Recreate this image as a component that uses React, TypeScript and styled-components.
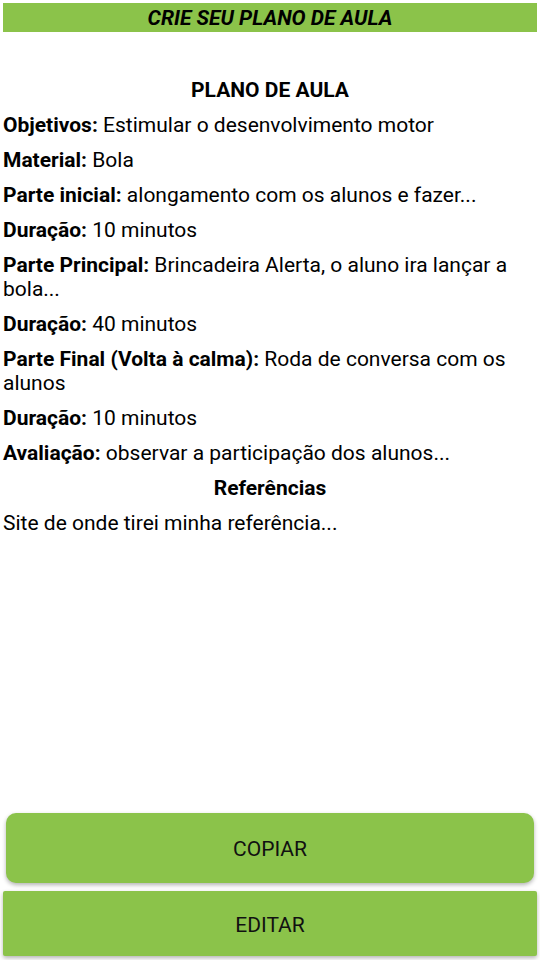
import React from 'react';
import styled, { createGlobalStyle } from 'styled-components';

const GlobalStyle = createGlobalStyle`
  html, body {
    margin: 0;
    padding: 0;
    background: #fff;
  }
  body {
    font-family: Roboto, "Liberation Sans", sans-serif;
    color: #000;
  }
`;

const Screen = styled.div`
  width: 540px;
  height: 960px;
  box-sizing: border-box;
  padding: 3px 3px 4px;
  display: flex;
  flex-direction: column;
`;

const TitleBar = styled.div`
  height: 29px;
  background: #8bc34a;
  display: flex;
  align-items: center;
  justify-content: center;
  font-size: 21px;
  font-weight: bold;
  font-style: italic;
`;

const Content = styled.div`
  flex: 1;
  padding-top: 46px;
`;

const Heading = styled.div`
  text-align: center;
  font-weight: bold;
  font-size: 21px;
  line-height: 24px;
  margin-bottom: 11px;
`;

const Line = styled.p`
  margin: 0 0 11px;
  font-size: 21px;
  line-height: 24px;
`;

const Footer = styled.div`
  display: flex;
  flex-direction: column;
  gap: 8px;
`;

const Button = styled.button<{ $rounded?: boolean }>`
  border: none;
  background: #8bc34a;
  font-family: Roboto, "Liberation Sans", sans-serif;
  font-size: 21px;
  color: #111;
  cursor: pointer;
  padding-top: 3px;
  height: ${p => (p.$rounded ? '70px' : '65px')};
  margin: ${p => (p.$rounded ? '0 3px' : '0')};
  border-radius: ${p => (p.$rounded ? '10px' : '2px')};
  box-shadow: 0 2px 4px rgba(0, 0, 0, 0.3);
`;

const items: [string, string][] = [
  ['Objetivos:', 'Estimular o desenvolvimento motor'],
  ['Material:', 'Bola'],
  ['Parte inicial:', 'alongamento com os alunos e fazer...'],
  ['Duração:', '10 minutos'],
  ['Parte Principal:', 'Brincadeira Alerta, o aluno ira lançar a bola...'],
  ['Duração:', '40 minutos'],
  ['Parte Final (Volta à calma):', 'Roda de conversa com os alunos'],
  ['Duração:', '10 minutos'],
  ['Avaliação:', 'observar a participação dos alunos...'],
];

export default function App() {
  return (
    <>
      <GlobalStyle />
      <Screen>
        <TitleBar>CRIE SEU PLANO DE AULA</TitleBar>
        <Content>
          <Heading>PLANO DE AULA</Heading>
          {items.map(([label, text], i) => (
            <Line key={i}>
              <b>{label}</b> {text}
            </Line>
          ))}
          <Heading>Referências</Heading>
          <Line>Site de onde tirei minha referência...</Line>
        </Content>
        <Footer>
          <Button $rounded>COPIAR</Button>
          <Button>EDITAR</Button>
        </Footer>
      </Screen>
    </>
  );
}
